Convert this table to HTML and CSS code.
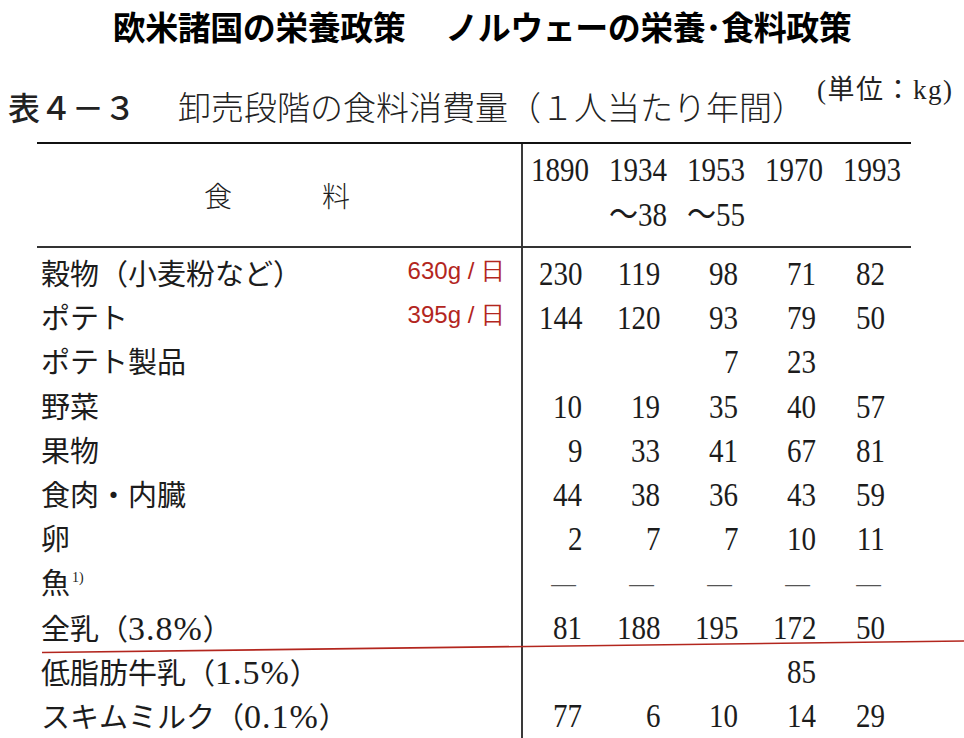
FILE: index.html
```html
<!DOCTYPE html>
<html lang="ja">
<head>
<meta charset="utf-8">
<title>ノルウェーの栄養･食料政策</title>
<link rel="stylesheet" href="styles.css">
</head>
<body>
<div class="page">
  <h1 class="title"><span>欧米諸国の栄養政策</span><span class="title-sub">ノルウェーの栄養･食料政策</span></h1>
  <div class="caption"><span class="cap-no">表４－３</span><span class="cap-text">卸売段階の食料消費量（１人当たり年間）</span><span class="unit">(単位：kg)</span></div>

  <div class="table">
    <div class="thead">
      <div class="hlabel"><span>食</span><span>料</span></div>
      <div class="hyear"><span class="n">1890</span></div>
      <div class="hyear"><span class="n">1934</span><span class="n">〜38</span></div>
      <div class="hyear"><span class="n">1953</span><span class="n">〜55</span></div>
      <div class="hyear"><span class="n">1970</span></div>
      <div class="hyear"><span class="n">1993</span></div>
    </div>
    <div class="tbody">
      <div class="label"><span>穀物（小麦粉など）</span><span class="note">630g / 日</span></div>
      <div class="num"><span class="n">230</span></div><div class="num"><span class="n">119</span></div><div class="num"><span class="n">98</span></div><div class="num"><span class="n">71</span></div><div class="num last"><span class="n">82</span></div>

      <div class="label"><span>ポテト</span><span class="note">395g / 日</span></div>
      <div class="num"><span class="n">144</span></div><div class="num"><span class="n">120</span></div><div class="num"><span class="n">93</span></div><div class="num"><span class="n">79</span></div><div class="num last"><span class="n">50</span></div>

      <div class="label"><span>ポテト製品</span></div>
      <div class="num"></div><div class="num"></div><div class="num"><span class="n">7</span></div><div class="num"><span class="n">23</span></div><div class="num last"></div>

      <div class="label"><span>野菜</span></div>
      <div class="num"><span class="n">10</span></div><div class="num"><span class="n">19</span></div><div class="num"><span class="n">35</span></div><div class="num"><span class="n">40</span></div><div class="num last"><span class="n">57</span></div>

      <div class="label"><span>果物</span></div>
      <div class="num"><span class="n">9</span></div><div class="num"><span class="n">33</span></div><div class="num"><span class="n">41</span></div><div class="num"><span class="n">67</span></div><div class="num last"><span class="n">81</span></div>

      <div class="label"><span>食肉・内臓</span></div>
      <div class="num"><span class="n">44</span></div><div class="num"><span class="n">38</span></div><div class="num"><span class="n">36</span></div><div class="num"><span class="n">43</span></div><div class="num last"><span class="n">59</span></div>

      <div class="label"><span>卵</span></div>
      <div class="num"><span class="n">2</span></div><div class="num"><span class="n">7</span></div><div class="num"><span class="n">7</span></div><div class="num"><span class="n">10</span></div><div class="num last"><span class="n">11</span></div>

      <div class="label"><span>魚<sup class="fn">1)</sup></span></div>
      <div class="num dash"><span class="n">—</span></div><div class="num dash"><span class="n">—</span></div><div class="num dash"><span class="n">—</span></div><div class="num dash"><span class="n">—</span></div><div class="num dash last"><span class="n">—</span></div>

      <div class="label"><span>全乳（<span class="pct">3.8%</span>）</span></div>
      <div class="num"><span class="n">81</span></div><div class="num"><span class="n">188</span></div><div class="num"><span class="n">195</span></div><div class="num"><span class="n">172</span></div><div class="num last"><span class="n">50</span></div>

      <div class="label"><span>低脂肪牛乳（<span class="pct">1.5%</span>）</span></div>
      <div class="num"></div><div class="num"></div><div class="num"></div><div class="num"><span class="n">85</span></div><div class="num last"></div>

      <div class="label"><span>スキムミルク（<span class="pct">0.1%</span>）</span></div>
      <div class="num"><span class="n">77</span></div><div class="num"><span class="n">6</span></div><div class="num"><span class="n">10</span></div><div class="num"><span class="n">14</span></div><div class="num last"><span class="n">29</span></div>
    </div>
  </div>

  <svg class="redline" width="964" height="738" viewBox="0 0 964 738" aria-hidden="true">
    <line x1="42" y1="652.5" x2="964" y2="641" stroke="#b3261e" stroke-width="1.6"/>
  </svg>
</div>
</body>
</html>
```

FILE: styles.css
```css
html, body {
  margin: 0;
  padding: 0;
  background: #ffffff;
}

body {
  width: 964px;
  height: 738px;
  overflow: hidden;
  color: #1c1c1c;
  font-family: "Liberation Serif", "Noto Sans CJK JP", serif;
}

.page {
  position: relative;
  width: 964px;
  height: 738px;
}

.title {
  margin: 0;
  height: 52px;
  line-height: 52px;
  text-align: center;
  font-family: "Noto Sans CJK JP", sans-serif;
  font-weight: 700;
  font-size: 33px;
  color: #000;
  letter-spacing: -0.5px;
}

.title-sub {
  margin-left: 40px;
}

.caption {
  display: flex;
  align-items: flex-start;
  margin-top: 34px;
  height: 40px;
  padding-left: 8px;
  white-space: nowrap;
  color: #222;
}

.cap-no {
  font-family: "Noto Sans CJK JP", sans-serif;
  font-weight: 500;
  font-size: 32px;
  line-height: 40px;
}

.cap-text {
  margin-left: 42px;
  font-family: "Noto Sans CJK JP", sans-serif;
  font-weight: 300;
  font-size: 33px;
  line-height: 40px;
}

.unit {
  margin-left: 12px;
  margin-top: -9px;
  font-family: "Liberation Serif", "Noto Sans CJK JP", serif;
  font-size: 27px;
  letter-spacing: 1.5px;
  line-height: 27px;
}

.table {
  margin-top: 16px;
  margin-left: 37px;
  width: 874px;
  border-top: 2px solid #111;
  background: linear-gradient(#3a3a3a, #3a3a3a) 484px 0 / 2px 100% no-repeat;
}

.thead,
.tbody {
  display: grid;
  grid-template-columns: 484px repeat(5, 78px);
}

.thead {
  height: 102px;
  border-bottom: 2px solid #333;
}

.hlabel {
  display: flex;
  justify-content: center;
  align-items: center;
  gap: 90px;
  font-family: "Noto Sans CJK JP", sans-serif;
  font-weight: 300;
  font-size: 28px;
  padding-right: 4px;
}

.hyear {
  display: flex;
  flex-direction: column;
  align-items: center;
  padding-top: 4px;
  font-size: 33px;
  line-height: 45px;
}

.tbody {
  padding-top: 4px;
  padding-bottom: 40px;
  grid-auto-rows: 44.2px;
}

.label {
  display: flex;
  align-items: center;
  justify-content: space-between;
  padding-left: 4px;
  padding-right: 16px;
  font-family: "Liberation Serif", "Noto Sans CJK JP", serif;
  font-weight: 400;
  font-size: 29px;
  line-height: 29px;
  white-space: nowrap;
}

.label > span:first-child {
  padding-top: 3px;
}

.pct {
  font-size: 34px;
  letter-spacing: 1px;
}

.note {
  font-family: "Liberation Sans", Arial, sans-serif;
  font-size: 24px;
  line-height: 24px;
  color: #b3261e;
  margin-bottom: 6px;
  white-space: pre;
}

.fn {
  font-size: 14px;
  vertical-align: 12px;
  margin-left: 2px;
  line-height: 0;
}

.num {
  text-align: right;
  padding-right: 17px;
  font-size: 33px;
  line-height: 44.2px;
}

.num.last {
  padding-right: 26px;
}

.n {
  display: inline-block;
  transform: scaleX(0.88);
  transform-origin: right center;
}

.hyear .n {
  transform-origin: center center;
}

.dash {
  font-size: 28px;
  color: #555;
  padding-right: 23px;
}

.dash.last {
  padding-right: 30px;
}

.redline {
  position: absolute;
  left: 0;
  top: 0;
  pointer-events: none;
}
```
